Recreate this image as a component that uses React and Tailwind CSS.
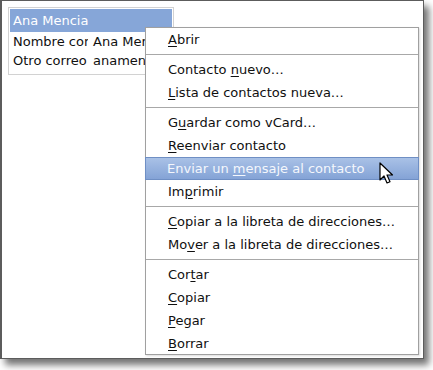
import React from "react";

const U = ({ children }) => <span className="underline underline-offset-2">{children}</span>;

const Item = ({ children, active }) => (
  <div
    className={
      "h-[23px] flex items-center pl-[22px] whitespace-nowrap " +
      (active
        ? "bg-gradient-to-b from-[#a9c1e6] to-[#84a3d6] border border-[#6f8fc4] text-[#f4f7fc] -mx-px"
        : "text-[#101010]")
    }
  >
    <span className={active ? "-ml-px" : ""}>{children}</span>
  </div>
);

const Sep = () => (
  <div className="h-[7px] flex items-center">
    <div className="h-px w-full bg-[#a8a8a8]" />
  </div>
);

export default function App() {
  return (
    <div
      className="w-[433px] h-[370px] bg-white relative overflow-hidden"
      style={{ fontFamily: '"DejaVu Sans", sans-serif' }}
    >
      <div className="w-[424px] h-[359px] bg-white border border-[#5c5c5c] border-l-2 relative shadow-[5px_6px_7px_rgba(0,0,0,0.55)] text-[13px]">
        <div className="absolute left-[6px] top-[6px] w-[166px] h-[68px] border border-[#d2d2d2] p-px">
          <div className="h-[23px] bg-[#86a6d8] text-white flex items-center pl-[3px]">Ana Mencia</div>
          <div className="flex h-[19px] items-center text-[#101010] overflow-hidden">
            <div className="w-[80px] shrink-0 pl-[3px]">
              <div className="w-[75px] overflow-hidden whitespace-nowrap">Nombre completo</div>
            </div>
            <div className="pl-[3px] whitespace-nowrap">Ana Mencia</div>
          </div>
          <div className="flex h-[19px] items-center text-[#101010] overflow-hidden">
            <div className="w-[80px] shrink-0 pl-[3px]">
              <div className="w-[75px] overflow-hidden whitespace-nowrap">Otro correo</div>
            </div>
            <div className="pl-[3px] whitespace-nowrap">anamencia@example.com</div>
          </div>
        </div>

        <div className="absolute left-[143px] top-[26px] w-[274px] h-[328px] bg-white border border-[#a0a0a0] shadow-[1px_1px_2px_rgba(0,0,0,0.15)]">
          <Item><U>A</U>brir</Item>
          <Sep />
          <Item>Contacto <U>n</U>uevo…</Item>
          <Item><U>L</U>ista de contactos nueva…</Item>
          <Sep />
          <Item>G<U>u</U>ardar como vCard…</Item>
          <Item><U>R</U>eenviar contacto</Item>
          <Item active>Enviar un <U>m</U>ensaje al contacto</Item>
          <Item>Im<U>p</U>rimir</Item>
          <Sep />
          <Item><U>C</U>opiar a la libreta de direcciones…</Item>
          <Item>Mo<U>v</U>er a la libreta de direcciones…</Item>
          <Sep />
          <Item>Cor<U>t</U>ar</Item>
          <Item><U>C</U>opiar</Item>
          <Item><U>P</U>egar</Item>
          <Item><U>B</U>orrar</Item>
        </div>

        <svg className="absolute left-[377px] top-[161px]" width="16" height="24" viewBox="0 0 16 24">
          <path
            d="M1 1 L1 18 L5 14 L8 21 L11 19.8 L8 13 L13.5 13 Z"
            fill="#ffffff"
            stroke="#000000"
            strokeWidth="1.2"
            strokeLinejoin="round"
          />
        </svg>
      </div>
    </div>
  );
}
